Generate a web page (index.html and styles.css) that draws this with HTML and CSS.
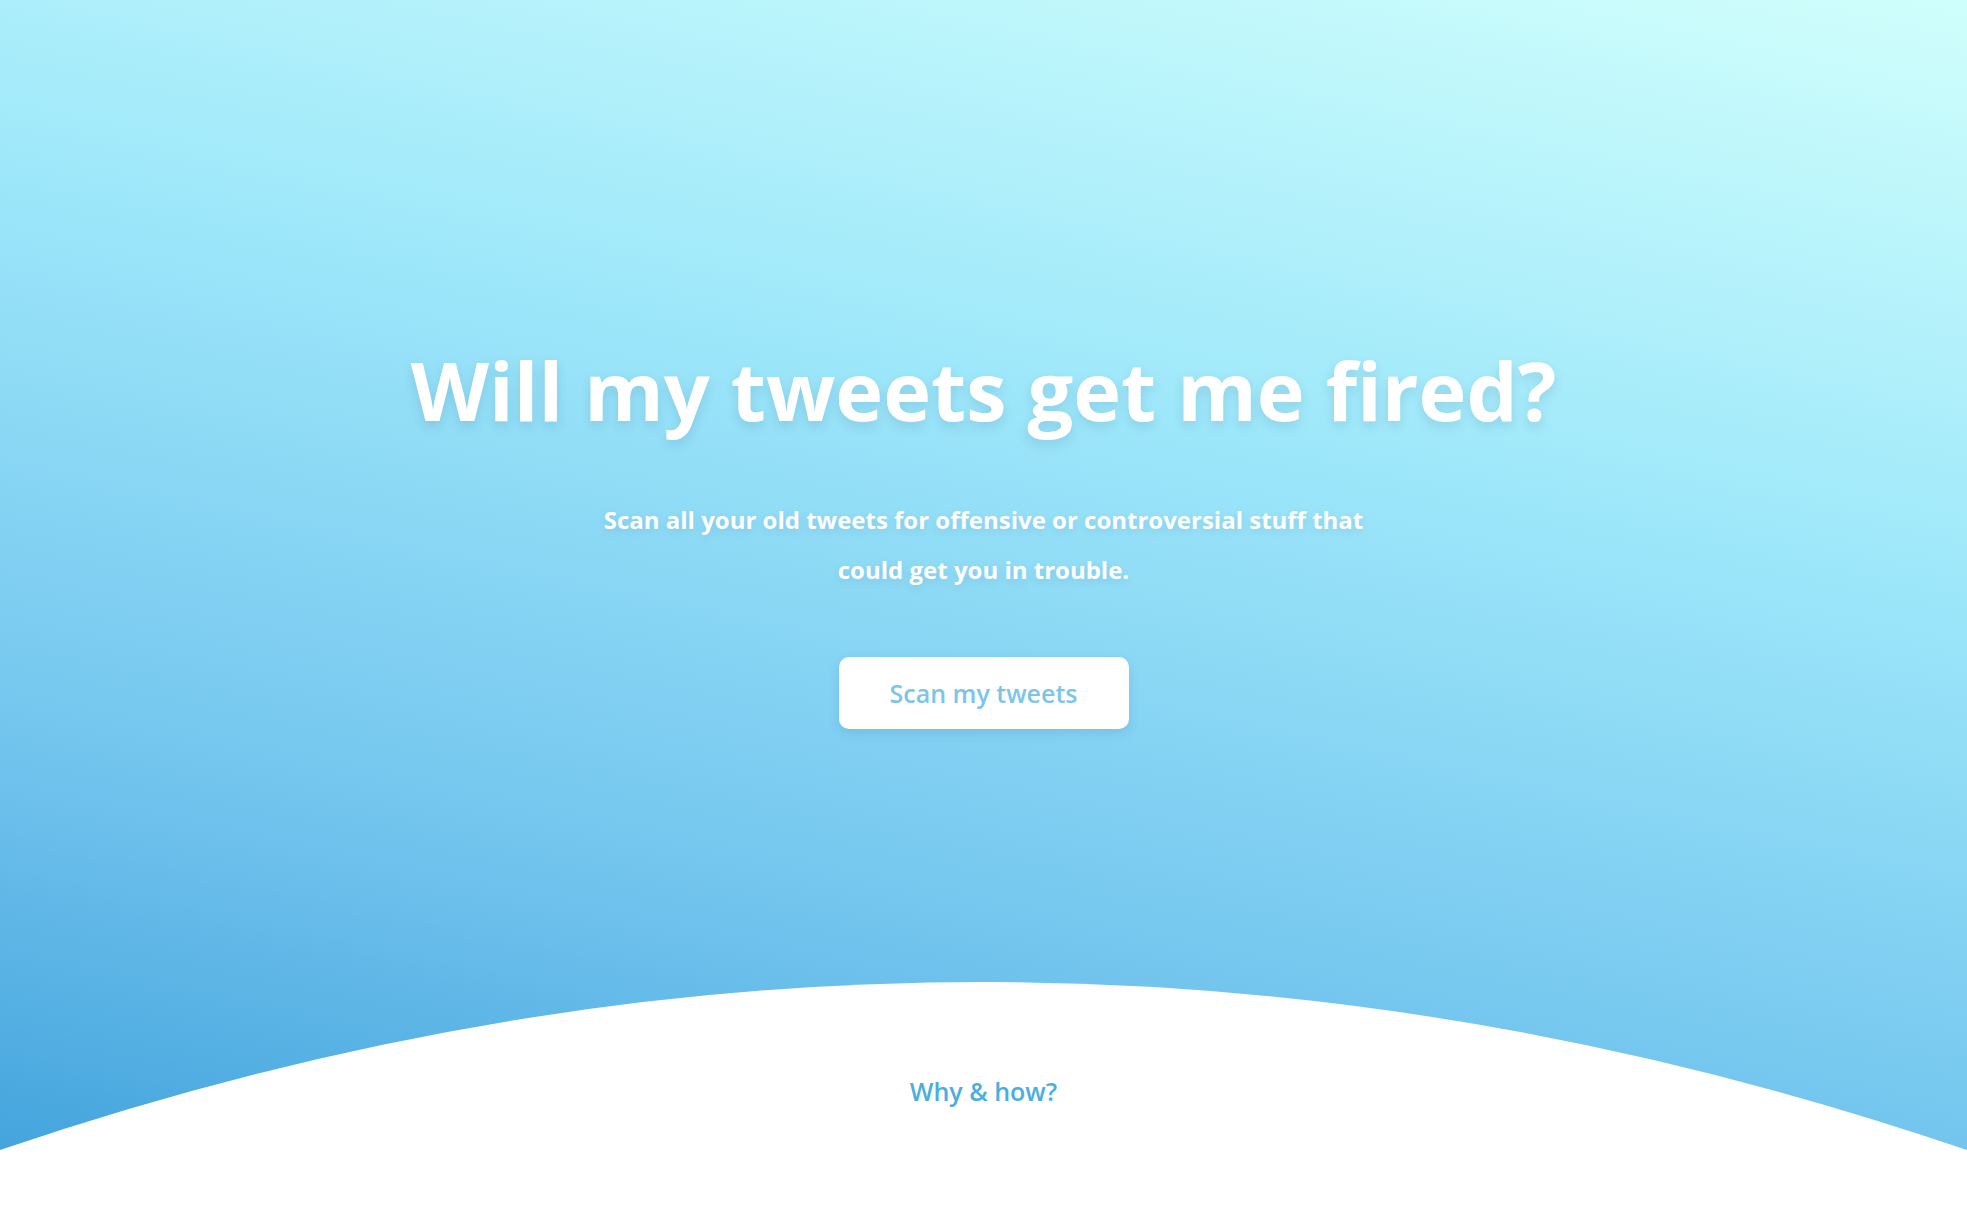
FILE: index.html
```html
<!DOCTYPE html>
<html lang="en">
<head>
    <meta charset="UTF-8">
    <meta name="viewport" content="width=device-width, initial-scale=1.0">
    <title>Will my tweets get me fired?</title>
    <link rel="stylesheet" href="styles.css">
</head>
<body>
<div class="page">
    <header class="hero">
        <h1 class="hero-title">Will my tweets get me fired?</h1>
        <p class="hero-lead">Scan all your old tweets for offensive or controversial stuff that could get you in trouble.</p>
        <a class="scan-button" href="#scan">Scan my tweets</a>
    </header>

    <section class="why">
        <!-- white hill that the hero gradient sits behind -->
        <svg class="why-curve" viewBox="0 0 1967 248" preserveAspectRatio="none" aria-hidden="true">
            <path d="M0 168 Q983.5 -168 1967 168 L1967 248 L0 248 Z" fill="#ffffff"/>
        </svg>
        <a class="why-link" href="#why">Why &amp; how?</a>
    </section>
</div>
</body>
</html>
```

FILE: styles.css
```css
:root {
    --button-text: #7cc5ea;
    --link-color: #4aaee0;
}

* {
    margin: 0;
    padding: 0;
    box-sizing: border-box;
}

body {
    font-family: 'Open Sans', 'Noto Sans', sans-serif;
    color: #ffffff;
    background: #ffffff;
    overflow: hidden;
}

.page {
    min-height: 100vh;
    display: flex;
    flex-direction: column;
    background: linear-gradient(12deg, #3c9eda 0%, #76c7ef 32%, #9de7fa 64%, #d0fffc 100%);
}

.hero {
    height: 982px;
    padding-top: 341px;
    display: flex;
    flex-direction: column;
    align-items: center;
    text-align: center;
}

.hero-title {
    font-size: 81px;
    font-weight: 700;
    line-height: 1.2;
    text-shadow: 0 5px 12px rgba(0, 40, 90, 0.12);
}

.hero-lead {
    max-width: 800px;
    margin-top: 57px;
    font-size: 24px;
    font-weight: 700;
    line-height: 50px;
    text-shadow: 0 3px 8px rgba(0, 40, 90, 0.1);
}

.scan-button {
    margin-top: 62px;
    display: inline-block;
    width: 290px;
    height: 72px;
    line-height: 72px;
    border-radius: 10px;
    background: #ffffff;
    color: var(--button-text);
    font-size: 25px;
    font-weight: 600;
    text-decoration: none;
    box-shadow: 0 4px 12px rgba(0, 60, 120, 0.12);
}

.why {
    position: relative;
    flex: 1;
    min-height: 248px;
    display: flex;
    justify-content: center;
    padding-top: 92px;
}

.why-curve {
    position: absolute;
    top: 0;
    left: 0;
    width: 100%;
    height: 248px;
    display: block;
}

.why-curve + .why-link {
    position: relative;
}

.why-link {
    color: var(--link-color);
    font-size: 25px;
    font-weight: 600;
    line-height: 1.4;
    text-decoration: none;
    height: fit-content;
}
```
